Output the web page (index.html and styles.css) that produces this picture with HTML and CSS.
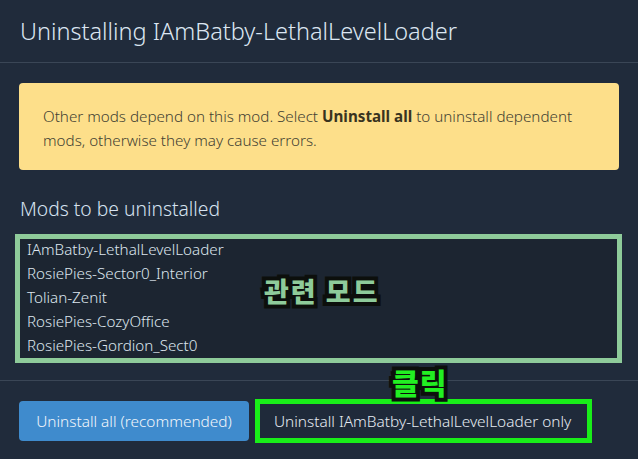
FILE: index.html
```html
<!DOCTYPE html>
<html>
<head>
<meta charset="utf-8">
<link rel="stylesheet" href="styles.css">
</head>
<body>
<div class="modal">
  <header class="modal-header">
    <h2 class="title">Uninstalling IAmBatby-LethalLevelLoader</h2>
  </header>
  <section class="modal-body">
    <div class="alert">Other mods depend on this mod. Select <strong>Uninstall all</strong> to uninstall dependent mods, otherwise they may cause errors.</div>
    <h3 class="subtitle">Mods to be uninstalled</h3>
    <div class="list-wrap">
      <ul class="mod-list">
        <li>IAmBatby-LethalLevelLoader</li>
        <li>RosiePies-Sector0_Interior</li>
        <li>Tolian-Zenit</li>
        <li>RosiePies-CozyOffice</li>
        <li>RosiePies-Gordion_Sect0</li>
      </ul>
      <span class="note note-mods">관련 모드</span>
    </div>
  </section>
  <footer class="modal-footer">
    <button class="btn btn-primary">Uninstall all (recommended)</button>
    <button class="btn btn-outline">Uninstall IAmBatby-LethalLevelLoader only</button>
    <span class="note note-click">클릭</span>
  </footer>
</div>
</body>
</html>
```

FILE: styles.css
```css
* { box-sizing: border-box; }
html, body {
  margin: 0;
  padding: 0;
  background: #202b3b;
  width: 638px;
  height: 459px;
  overflow: hidden;
}
body {
  font-family: "Noto Sans", "Noto Sans CJK KR", sans-serif;
  font-weight: 300;
  color: #d8e2ee;
}
.modal {
  display: flex;
  flex-direction: column;
  height: 459px;
}
.modal-header {
  height: 63px;
  border-bottom: 1px solid #3a4656;
  padding: 0 20px 1px 20px;
  display: flex;
  align-items: center;
}
.title {
  margin: 0;
  font-weight: 300;
  font-size: 23.5px;
  color: #dce6f2;
}
.modal-body {
  padding: 20px 19px 0 19px;
  height: 317px;
}
.alert {
  background: #fddf8a;
  color: #433f33;
  border-radius: 4px;
  padding: 21px 24px 18px 24px;
  font-size: 15.2px;
  line-height: 24px;
}
.alert strong { font-weight: 700; color: #38331f; }
.subtitle {
  margin: 25px 0 0 1px;
  font-weight: 300;
  font-size: 19.3px;
  line-height: 28px;
  color: #d6e2f0;
}
.list-wrap {
  position: relative;
  margin: 11px -3px 0 -4px;
  border: 5px solid #8ecb9a;
  height: 129px;
  background: #1c2531;
}
.mod-list {
  list-style: none;
  margin: -2px 0 0 0;
  padding: 0 0 0 7px;
  font-size: 15.2px;
  line-height: 24px;
  color: #dde5ee;
}
.note {
  position: absolute;
  font-family: "Noto Sans CJK KR", sans-serif;
  font-weight: 900;
  paint-order: stroke fill;
  -webkit-text-stroke: 8px #0c0f0c;
  white-space: nowrap;
}
.note-mods {
  left: 244px;
  top: 36px;
  font-size: 27px;
  line-height: 32px;
  letter-spacing: 2px;
  color: #8ecb9a;
}
.modal-footer {
  position: relative;
  border-top: 1px solid #3a4656;
  flex: 1;
  display: flex;
  align-items: flex-start;
  padding: 18px 19px 0 19px;
  gap: 6px;
}
.btn {
  font-family: "Noto Sans", sans-serif;
  font-weight: 300;
  font-size: 15.4px;
  border-radius: 4px;
  cursor: pointer;
}
.btn-primary {
  margin-top: 2px;
  height: 40px;
  width: 230px;
  background: #3f8bcd;
  border: none;
  color: #f2f6fb;
  padding: 0;
}
.btn-outline {
  height: 44px;
  width: 337px;
  background: #1f2a3a;
  border: 5px solid #19ee19;
  border-radius: 0;
  color: #e6ecf3;
  padding: 0 0 0 14px;
  text-align: left;
}
.note-click {
  left: 392px;
  top: -17px;
  font-size: 29px;
  line-height: 36px;
  letter-spacing: 1px;
  color: #22ee22;
}
```
